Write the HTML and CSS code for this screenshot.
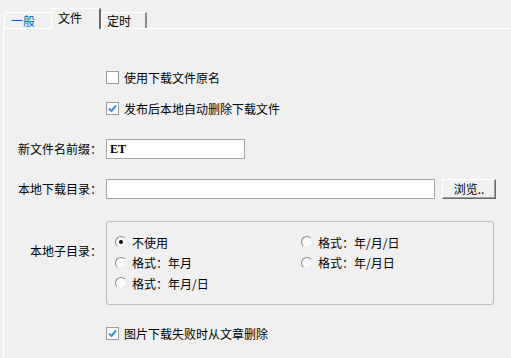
FILE: index.html
```html
<!DOCTYPE html>
<html lang="zh-CN">
<head>
    <meta charset="UTF-8">
    <title>设置</title>
    <link rel="stylesheet" href="styles.css">
</head>
<body>
    <div class="tabs">
        <div class="tab tab-hot">一般</div>
        <div class="tab tab-active">文件</div>
        <div class="tab tab-last">定时</div>
    </div>
    <div class="panel">
        <label class="check-row row-first">
            <span class="checkbox"></span>使用下载文件原名
        </label>
        <label class="check-row row-second">
            <span class="checkbox"><svg width="11" height="11" viewBox="0 0 11 11"><polyline points="2,5.5 4.5,8 9,2.5" fill="none" stroke="#3d8ee8" stroke-width="2"/></svg></span>发布后本地自动删除下载文件
        </label>

        <div class="field-row row-prefix">
            <span class="field-label">新文件名前缀：</span>
            <div class="textbox textbox-short">ET</div>
        </div>
        <div class="field-row row-dir">
            <span class="field-label">本地下载目录：</span>
            <div class="textbox textbox-long"></div>
            <div class="button">浏览..</div>
        </div>

        <div class="field-row row-sub">
            <span class="field-label label-top">本地子目录：</span>
            <div class="groupbox">
                <div class="radio-grid">
                    <div class="radio-item"><span class="radio checked"></span>不使用</div>
                    <div class="radio-item"><span class="radio"></span>格式：年/月/日</div>
                    <div class="radio-item"><span class="radio"></span>格式：年月</div>
                    <div class="radio-item"><span class="radio"></span>格式：年/月日</div>
                    <div class="radio-item"><span class="radio"></span>格式：年月/日</div>
                </div>
            </div>
        </div>

        <label class="check-row row-last">
            <span class="checkbox"><svg width="11" height="11" viewBox="0 0 11 11"><polyline points="2,5.5 4.5,8 9,2.5" fill="none" stroke="#3d8ee8" stroke-width="2"/></svg></span>图片下载失败时从文章删除
        </label>
    </div>
</body>
</html>
```

FILE: styles.css
```css
body {
    margin: 0;
    height: 358px;
    overflow: hidden;
    background: #f0f0f0;
    font-family: "Noto Sans CJK SC", "Noto Sans", sans-serif;
    font-size: 12px;
    color: #000;
}

/* tab strip */
.tabs {
    display: flex;
    align-items: flex-end;
    height: 28px;
    padding-left: 4px;
}

.tab {
    box-sizing: border-box;
    height: 16px;
    width: 47px;
    padding-left: 6px;
    line-height: 16px;
    border-top: 1px solid #fff;
    border-left: 1px solid #fff;
    border-top-left-radius: 2px;
}

.tab-hot {
    color: #0066cc;
}

.tab-active {
    position: relative;
    z-index: 1;
    width: 50px;
    height: 21px;
    margin-bottom: -1px;
    padding-left: 6px;
    line-height: 18px;
    background: #f0f0f0;
    border-right: 2px solid #696969;
}

.tab-last {
    width: 46px;
    padding-left: 5px;
    border-right: 2px solid #8a8a8a;
}

/* page body */
.panel {
    box-sizing: border-box;
    height: 330px;
    margin-left: 3px;
    padding-top: 38px;
    border-top: 1px solid #fff;
    border-left: 1px solid #fff;
    display: flex;
    flex-direction: column;
}

.check-row {
    display: flex;
    align-items: center;
    height: 20px;
    padding-left: 102px;
}

.checkbox {
    box-sizing: border-box;
    width: 13px;
    height: 13px;
    margin-right: 5px;
    background: #fff;
    border: 1px solid #9a9a9a;
    display: flex;
    align-items: center;
    justify-content: center;
}

.row-second { margin-top: 11px; }
.row-prefix { margin-top: 21px; }
.row-dir { margin-top: 20px; }
.row-sub { margin-top: 22px; }
.row-last { margin-top: 18px; }

.field-row {
    display: flex;
    align-items: flex-start;
}

.field-label {
    width: 98px;
    margin-right: 4px;
    text-align: right;
    line-height: 20px;
}

.label-top {
    margin-top: 20px;
}

.textbox {
    box-sizing: border-box;
    height: 20px;
    padding-left: 3px;
    background: #fff;
    border: 1px solid #a3a3a3;
    font-family: "Liberation Serif", serif;
    font-weight: bold;
    font-size: 12px;
    line-height: 18px;
}

.textbox-short { width: 139px; }
.textbox-long { width: 329px; }

.button {
    box-sizing: border-box;
    width: 54px;
    height: 20px;
    margin-left: 7px;
    text-align: center;
    line-height: 17px;
    background: #f0f0f0;
    border-top: 1px solid #fff;
    border-left: 1px solid #fff;
    border-right: 1px solid #696969;
    border-bottom: 1px solid #696969;
    box-shadow: inset -1px -1px 0 #a0a0a0;
}

/* sub-directory options */
.groupbox {
    box-sizing: border-box;
    width: 388px;
    height: 84px;
    padding: 10px 0 0 8px;
    border: 1px solid #bdbdbd;
    border-radius: 3px;
}

.radio-grid {
    display: grid;
    grid-template-columns: 186px auto;
    grid-auto-rows: 20.5px;
}

.radio-item {
    display: flex;
    align-items: center;
}

.radio {
    box-sizing: border-box;
    width: 12px;
    height: 12px;
    margin-right: 5px;
    border-radius: 50%;
    background: #fafafa;
    border: 1px solid;
    border-color: #8a8a8a #e8e8e8 #e8e8e8 #8a8a8a;
    display: flex;
    align-items: center;
    justify-content: center;
}

.radio.checked::after {
    content: '';
    width: 4px;
    height: 4px;
    border-radius: 50%;
    background: #000;
}
```
